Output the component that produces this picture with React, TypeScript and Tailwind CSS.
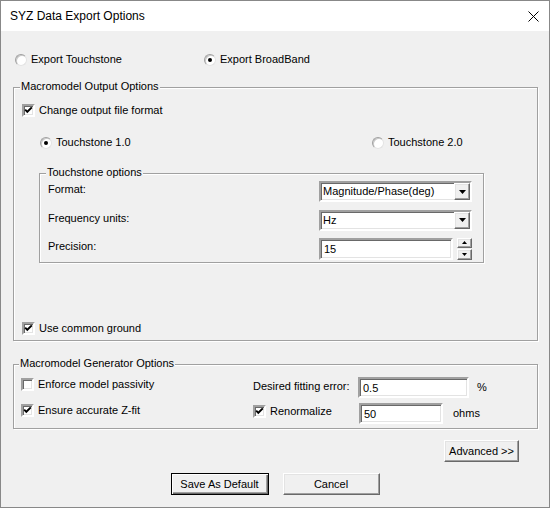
import React from "react";

const sunken =
  "border-2 border-t-[#a0a0a0] border-l-[#a0a0a0] border-b-white border-r-white shadow-[inset_1px_1px_0_#696969,inset_-1px_-1px_0_#e3e3e3]";
const raised =
  "border border-t-white border-l-white border-b-[#696969] border-r-[#696969] shadow-[inset_-1px_-1px_0_#a0a0a0,inset_1px_1px_0_#e3e3e3] bg-[#f0f0f0]";

function Radio({ label, checked }: { label: string; checked?: boolean }) {
  return (
    <div className="flex items-center h-[13px]">
      <div className="w-[12px] h-[12px] rounded-full border border-t-[#a0a0a0] border-l-[#a0a0a0] border-b-[#e3e3e3] border-r-[#e3e3e3] bg-white flex items-center justify-center shrink-0 shadow-[inset_1px_1px_0_#c8c8c8]">
        {checked && <div className="w-[4px] h-[4px] rounded-full bg-black" />}
      </div>
      <span className="ml-[4px] leading-[13px]">{label}</span>
    </div>
  );
}

function Check({ label, checked }: { label: string; checked?: boolean }) {
  return (
    <div className="flex items-center h-[13px]">
      <div className={`w-[13px] h-[13px] bg-white shrink-0 flex items-center justify-center ${sunken}`}>
        {checked && (
          <svg width="9" height="9" viewBox="0 0 9 9">
            <polyline points="1.2,3.6 3.3,5.8 7.8,1.4" fill="none" stroke="#000" strokeWidth="1.9" />
          </svg>
        )}
      </div>
      <span className="ml-[4px] leading-[13px]">{label}</span>
    </div>
  );
}

function Group({
  legend,
  legendLeft,
  className,
  children,
}: {
  legend: string;
  legendLeft: string;
  className: string;
  children: React.ReactNode;
}) {
  return (
    <div className={`relative border border-[#a0a0a0] shadow-[inset_1px_1px_0_#fff,1px_1px_0_#fff] flex flex-col ${className}`}>
      <span className={`absolute -top-[8px] ${legendLeft} px-[1px] bg-[#f0f0f0] leading-[13px]`}>{legend}</span>
      {children}
    </div>
  );
}

function Combo({ value }: { value: string }) {
  return (
    <div className={`w-[153px] h-[21px] bg-white flex items-center ${sunken}`}>
      <span className="flex-1 pl-[2px] leading-[13px]">{value}</span>
      <div className={`w-[16px] h-[17px] flex items-center justify-center ${raised}`}>
        <svg width="7" height="4" viewBox="0 0 7 4">
          <polygon points="0,0 7,0 3.5,4" fill="#000" />
        </svg>
      </div>
    </div>
  );
}

function Field({ value, className }: { value: string; className: string }) {
  return (
    <div className={`bg-white flex items-center pl-[3px] ${sunken} ${className}`}>
      <span className="leading-[13px] pt-[2px]">{value}</span>
    </div>
  );
}

export default function App() {
  return (
    <div className="w-[550px] h-[508px] border border-[#888888] flex flex-col font-['Liberation_Sans',Arial,sans-serif] text-[11px] text-black overflow-hidden">
      <div className="h-[30px] bg-white flex items-center justify-between pl-[9px] pr-[10px]">
        <span className="text-[12px]">SYZ Data Export Options</span>
        <svg width="11" height="11" viewBox="0 0 11 11">
          <path d="M0.5 0.5 L10.5 10.5 M10.5 0.5 L0.5 10.5" stroke="#000" strokeWidth="1" />
        </svg>
      </div>

      <div className="flex-1 bg-[#f0f0f0] flex flex-col">
        <div className="flex mt-[22px] pl-[14px]">
          <div className="w-[189px]">
            <Radio label="Export Touchstone" />
          </div>
          <Radio label="Export BroadBand" checked />
        </div>

        <Group legend="Macromodel Output Options" legendLeft="left-[6px]" className="mt-[21px] ml-[12px] w-[525px] h-[254px]">
          <div className="mt-[16px] pl-[8px]">
            <Check label="Change output file format" checked />
          </div>
          <div className="flex mt-[19px] ml-[26px]">
            <div className="w-[332px]">
              <Radio label="Touchstone 1.0" checked />
            </div>
            <Radio label="Touchstone 2.0" />
          </div>

          <Group legend="Touchstone options" legendLeft="left-[6px]" className="mt-[24px] ml-[25px] w-[445px] h-[90px]">
            <div className="flex items-center mt-[7px] pl-[8px]">
              <span className="w-[271px] pb-[5px]">Format:</span>
              <Combo value="Magnitude/Phase(deg)" />
            </div>
            <div className="flex items-center mt-[7px] pl-[8px]">
              <span className="w-[271px] pb-[4px]">Frequency units:</span>
              <Combo value="Hz" />
            </div>
            <div className="flex items-center mt-[7px] pl-[8px]">
              <span className="w-[271px] pb-[6px]">Precision:</span>
              <Field value="15" className="w-[134px] h-[22px]" />
              <div className="flex flex-col ml-[4px] gap-[1px]">
                <div className={`w-[15px] h-[10px] flex items-center justify-center ${raised}`}>
                  <svg width="5" height="3" viewBox="0 0 5 3">
                    <polygon points="0,3 5,3 2.5,0" fill="#000" />
                  </svg>
                </div>
                <div className={`w-[15px] h-[11px] flex items-center justify-center ${raised}`}>
                  <svg width="5" height="3" viewBox="0 0 5 3">
                    <polygon points="0,0 5,0 2.5,3" fill="#000" />
                  </svg>
                </div>
              </div>
            </div>
          </Group>

          <div className="mt-[59px] pl-[8px]">
            <Check label="Use common ground" checked />
          </div>
        </Group>

        <Group legend="Macromodel Generator Options" legendLeft="left-[5px]" className="mt-[23px] ml-[12px] w-[525px] h-[65px]">
          <div className="flex items-start mt-[12px] h-[21px]">
            <div className="w-[232px] ml-[7px] mt-[1px]">
              <Check label="Enforce model passivity" />
            </div>
            <span className="w-[105px] mt-[3px] leading-[13px]">Desired fitting error:</span>
            <Field value="0.5" className="w-[111px] h-[21px]" />
            <span className="ml-[8px] mt-[4px] leading-[13px]">%</span>
          </div>
          <div className="flex items-start mt-[5px] h-[21px]">
            <div className="w-[232px] ml-[7px] mt-[1px]">
              <Check label="Ensure accurate Z-fit" checked />
            </div>
            <div className="w-[106px] mt-[2px]">
              <Check label="Renormalize" checked />
            </div>
            <Field value="50" className="w-[84px] h-[21px]" />
            <span className="ml-[10px] mt-[4px] leading-[13px]">ohms</span>
          </div>
        </Group>

        <button className={`self-end mr-[30px] mt-[11px] w-[75px] h-[22px] ${raised}`}>Advanced &gt;&gt;</button>

        <div className="flex justify-center gap-[14px] mt-[11px]">
          <button className="w-[98px] h-[22px] border border-black bg-[#f0f0f0] shadow-[inset_1px_1px_0_#fff,inset_-1px_-1px_0_#696969,inset_-2px_-2px_0_#a0a0a0]">
            Save As Default
          </button>
          <button className={`w-[97px] h-[22px] ${raised}`}>Cancel</button>
        </div>
      </div>
    </div>
  );
}
